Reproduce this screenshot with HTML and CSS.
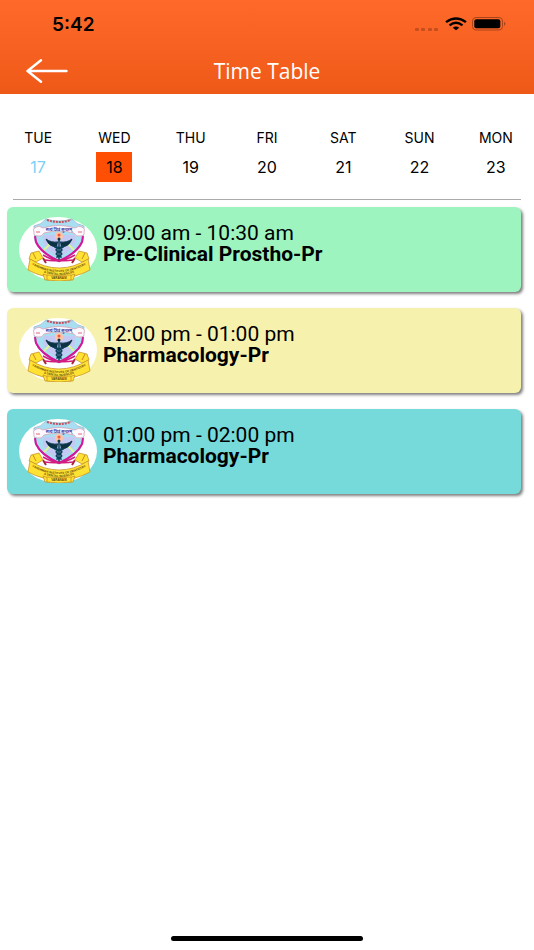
FILE: index.html
```html
<!DOCTYPE html>
<html lang="en">
<head>
    <meta charset="UTF-8">
    <meta name="viewport" content="width=device-width, initial-scale=1.0">
    <title>Time Table</title>
    <link rel="stylesheet" href="styles.css">
</head>
<body>
    <!-- College crest, used by every lesson card -->
    <svg width="0" height="0" class="sprite" aria-hidden="true">
        <symbol id="crest" viewBox="0 0 78 64" preserveAspectRatio="none">
            <ellipse cx="39" cy="32" rx="39" ry="32" fill="#fff"/>
            <!-- shield -->
            <path d="M15 9Q22 8 27 2Q40 6 53 2Q58 8 65 9L64 24Q59 37 40 45Q21 37 16 24Z" fill="#a8def2" stroke="#9cc3d4"/>
            <path d="M16 19L17 25Q22 36 40 44Q58 36 63 25L64 19" fill="none" stroke="#d8149a" stroke-width="2"/>
            <path d="M28 3Q40 7 52 3" fill="none" stroke="#c8505c" stroke-width="2" stroke-dasharray="2 1"/>
            <path d="M24 18H56V26Q52 35 40 40Q28 35 24 26Z" fill="#c3c9f3"/>
            <path d="M25 33L31 27M55 33L49 27" stroke="#d8f59b" stroke-width="2"/>
            <circle cx="40" cy="19" r="4" fill="#ffc4a8"/>
            <circle cx="40" cy="18" r="1.5" fill="#ef5a3c"/>
            <!-- motto scroll -->
            <path d="M17 10Q20 8 24 11Q40 6 56 11Q60 8 63 10Q67 12 65 15Q66 19 61 19Q57 20 55 16Q40 12 25 16Q23 20 19 19Q14 19 15 15Q13 12 17 10Z" fill="#fbf8ff" stroke="#d9a3b4" stroke-width=".8"/>
            <path d="M17 15H21M59 15H63" stroke="#e26a78"/>
            <text x="40" y="14" text-anchor="middle" class="crest-motto">सत्यं शिवं सुन्दरम्</text>
            <!-- swords -->
            <g fill="none" stroke="#d11c80">
                <path d="M26 43Q43 46 56 38M54 43Q37 46 24 38" stroke-width="1.5"/>
                <path d="M24 41L27 46M56 41L53 46" stroke="#a6263c" stroke-width="2"/>
            </g>
            <!-- caduceus -->
            <g fill="none" stroke="#0b4158" stroke-linecap="round">
                <path d="M40 22V42" stroke-width="1.5"/>
                <path d="M39 25Q32 26 27 22Q30 30 38 30M41 25Q48 26 53 22Q50 30 42 30" fill="#0b3145" stroke="#0b3145"/>
                <path d="M36 30Q47 32 40 35Q34 37 42 40M44 30Q33 32 40 35Q46 37 38 40" stroke-width="1.8"/>
            </g>
            <circle cx="40" cy="22" r="1.5" fill="#0b3145"/>
            <!-- ribbons -->
            <g fill="#ffe232" stroke="#c9962a" stroke-width=".8">
                <path d="M12 36L20 34L24 41L17 45L10 42ZM68 36L60 34L56 41L63 45L70 42Z"/>
                <path d="M14 36L17 42M66 36L63 42" fill="none" stroke="#c06b2c"/>
                <path d="M11 42Q25 51 40 51Q55 51 69 42L71 53Q56 61 40 61Q24 61 9 53Z"/>
                <path d="M24 57L30 59L31 63H26ZM56 57L50 59L49 63H54Z"/>
                <path d="M28 58Q40 59 52 58V63Q40 65 28 63Z"/>
            </g>
            <path id="band-top" d="M12 47Q26 55 40 55Q54 55 68 47" fill="none"/>
            <path id="band-low" d="M14 51Q28 58 40 58Q52 58 66 51" fill="none"/>
            <text class="crest-name"><textPath href="#band-top" startOffset="50%" text-anchor="middle">VARDHMAN INSTITUTE OF DENTISTRY</textPath></text>
            <text class="crest-name"><textPath href="#band-low" startOffset="50%" text-anchor="middle">&amp; DENTAL SCIENCES</textPath></text>
            <text x="40" y="62" text-anchor="middle" class="crest-name">VARANASI</text>
        </symbol>
    </svg>

    <header class="top-bar">
        <div class="status-bar">
            <span class="clock">5:42</span>
            <div class="status-icons">
                <svg class="signal" width="26" height="12" viewBox="0 0 26 12" fill="#c44e1d">
                    <rect x="1" y="9" width="4" height="3" rx="1"/>
                    <rect x="7" y="9" width="4" height="3" rx="1"/>
                    <rect x="14" y="9" width="4" height="3" rx="1"/>
                    <rect x="20" y="9" width="4" height="3" rx="1"/>
                </svg>
                <svg width="22" height="14" viewBox="0 0 22 14" fill="none" stroke="#000" stroke-width="2.3">
                    <path d="M1 5.2Q11-2.3 21 5.2"/>
                    <path d="M4.5 8.3Q11 3.3 17.5 8.3"/>
                    <path d="M11 13.2L7.8 10.7Q11 8.4 14.2 10.7Z" fill="#000" stroke="none"/>
                </svg>
                <svg width="34" height="14" viewBox="0 0 34 14">
                    <rect x=".5" y=".5" width="30" height="12.5" rx="3.5" fill="none" stroke="#a9441b"/>
                    <rect x="2.3" y="2.3" width="26" height="9" rx="2" fill="#000"/>
                    <path d="M32 4.5Q35 6.8 32 9Z" fill="#a9441b"/>
                </svg>
            </div>
        </div>
        <div class="nav-bar">
            <button type="button" class="back" aria-label="Back">
                <svg width="42" height="24" viewBox="0 0 42 24" fill="none" stroke="#fff" stroke-width="2.4" stroke-linecap="round" stroke-linejoin="round">
                    <path d="M40.5 12H1.5M15 1.3L1.5 12L15 22.7"/>
                </svg>
            </button>
            <h1>Time Table</h1>
        </div>
    </header>

    <nav class="week">
        <button type="button" class="day past"><span class="name">TUE</span><span class="date">17</span></button>
        <button type="button" class="day selected"><span class="name">WED</span><span class="date">18</span></button>
        <button type="button" class="day"><span class="name">THU</span><span class="date">19</span></button>
        <button type="button" class="day"><span class="name">FRI</span><span class="date">20</span></button>
        <button type="button" class="day"><span class="name">SAT</span><span class="date">21</span></button>
        <button type="button" class="day"><span class="name">SUN</span><span class="date">22</span></button>
        <button type="button" class="day"><span class="name">MON</span><span class="date">23</span></button>
    </nav>

    <main class="lessons">
        <article class="lesson green">
            <svg class="crest"><use href="#crest"/></svg>
            <div class="info">
                <p>09:00 am - 10:30 am</p>
                <h2>Pre-Clinical Prostho-Pr</h2>
            </div>
        </article>
        <article class="lesson yellow">
            <svg class="crest"><use href="#crest"/></svg>
            <div class="info">
                <p>12:00 pm - 01:00 pm</p>
                <h2>Pharmacology-Pr</h2>
            </div>
        </article>
        <article class="lesson blue">
            <svg class="crest"><use href="#crest"/></svg>
            <div class="info">
                <p>01:00 pm - 02:00 pm</p>
                <h2>Pharmacology-Pr</h2>
            </div>
        </article>
    </main>

    <div class="home-indicator"></div>
</body>
</html>
```
FILE: styles.css
```css
* {
    box-sizing: border-box;
}
body {
    margin: 0;
    min-height: 100vh;
    display: flex;
    flex-direction: column;
    background: #fff;
    color: #000;
    font-family: Roboto, sans-serif;
}
h1, h2, p {
    margin: 0;
}
button {
    padding: 0;
    border: none;
    background: none;
    color: inherit;
    font: inherit;
    cursor: pointer;
}
.sprite {
    position: absolute;
}
.top-bar {
    background: linear-gradient(#ff692a, #ef5918);
    color: #fff;
}
.status-bar {
    display: flex;
    justify-content: space-between;
    align-items: center;
    height: 48px;
    padding: 0 28px 0 52px;
}
.clock {
    color: #000;
    font-family: Inter, sans-serif;
    font-size: 19px;
    font-weight: 600;
}
.status-icons {
    display: flex;
    align-items: center;
    gap: 5px;
}
.signal {
    margin-top: 2px;
}
.nav-bar {
    display: grid;
    grid-template-columns: 1fr auto 1fr;
    align-items: center;
    height: 46px;
    padding: 0 26px;
}
.back {
    justify-self: start;
}
.back svg {
    display: block;
}
.nav-bar h1 {
    font-family: "Open Sans", sans-serif;
    font-size: 21px;
    font-weight: 400;
}
.week {
    display: flex;
    height: 69px;
    margin-top: 36px;
}
.day {
    flex: 1;
    display: flex;
    flex-direction: column;
    align-items: center;
    font-family: Inter, sans-serif;
}
.name {
    font-size: 14px;
    line-height: 16px;
}
.date {
    width: 36px;
    margin-top: 6px;
    font-size: 16px;
    line-height: 30px;
}
.past .date {
    color: #7dcff8;
}
.selected .date {
    background: #ff4f05;
}
.lessons {
    display: flex;
    flex-direction: column;
    gap: 16px;
    margin: 0 13px 0 7px;
}
.lessons::before {
    content: "";
    height: 1px;
    margin: 0 0 -9px 6px;
    background: #aaa;
}
.lesson {
    display: flex;
    gap: 6px;
    height: 85px;
    padding: 10px 12px;
    border-radius: 6px;
    box-shadow: 2px 2px 3px rgba(0, 0, 0, 0.5);
}
.crest {
    flex: none;
    width: 78px;
    height: 64px;
}
.crest-motto {
    font: bold 4px "Noto Sans", sans-serif;
    fill: #3438a4;
}
.crest-name {
    font: bold 3px "Liberation Sans", sans-serif;
    fill: #5c4810;
}
.info {
    padding-top: 6px;
}
.info p, .info h2 {
    font-size: 21px;
    line-height: 21px;
}
.info p {
    font-weight: 400;
}
.info h2 {
    font-weight: 700;
}
.green {
    background: #9df4be;
}
.yellow {
    background: #f6f2ae;
}
.blue {
    background: #76dada;
}
.home-indicator {
    width: 36%;
    height: 5px;
    margin: auto auto 9px;
    border-radius: 3px;
    background: #000;
}
```
